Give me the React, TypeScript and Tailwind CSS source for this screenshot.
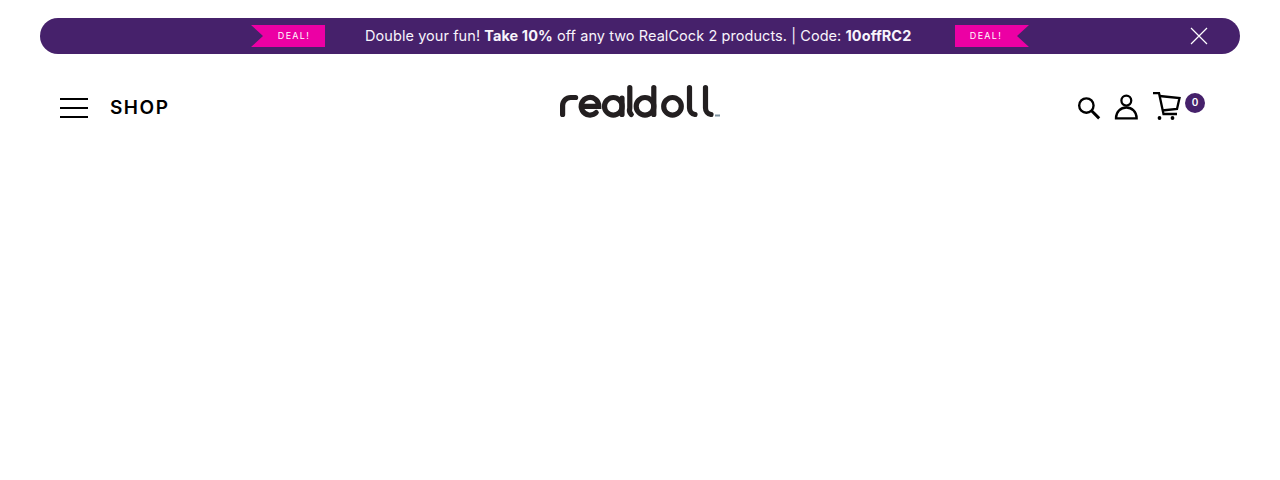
import React from "react";

function Ribbon({ flip }: { flip?: boolean }) {
  return (
    <div className="relative flex h-[22px] w-[74px] items-center justify-center">
      <svg viewBox="0 0 74 22" className="absolute inset-0 h-[22px] w-[74px]">
        <polygon
          fill="#ec00a4"
          points={flip ? "0,0 74,0 62,11 74,22 0,22" : "0,0 74,0 74,22 0,22 12,11"}
        />
      </svg>
      <span className={`relative text-[9px] tracking-[1.3px] text-white ${flip ? "-translate-x-[6px]" : "translate-x-[6px]"}`}>
        DEAL!
      </span>
    </div>
  );
}

function Logo() {
  return (
    <svg width="162" height="36" viewBox="0 0 162 36" fill="none" stroke="#231f20" strokeWidth="5.2" strokeLinecap="round" role="img" aria-label="realdoll">
      <path d="M2.6 30.5 V21.5 a8 8 0 0 1 8 -8 h5" />
      <path d="M21.2 22.3 h17.6 a8.8 8.8 0 1 0 -2.6 6.2" />
      <circle cx="53.3" cy="22.3" r="8.8" />
      <path d="M62 14 V30.5" />
      <path d="M69.8 3.5 V24 a6.5 6.5 0 0 0 1.5 6.5" />
      <circle cx="85" cy="22.3" r="8.8" />
      <path d="M93.8 3.5 V30.5" />
      <circle cx="112.5" cy="22.3" r="8.8" />
      <path d="M129.5 3.5 V24 a6.5 6.5 0 0 0 5.5 6.5" />
      <path d="M145.5 3.5 V24 a6.5 6.5 0 0 0 5.5 6.5" />
      <path d="M155 31.5 h5" stroke="#7d93a0" strokeWidth="2" strokeLinecap="butt" />
    </svg>
  );
}

export default function App() {
  return (
    <div className="h-[480px] w-[1280px] bg-white font-['Inter','Liberation_Sans',sans-serif]">
      <div className="px-10 pt-[18px]">
        <div className="relative flex h-9 items-center justify-center gap-10 rounded-full bg-[#46216b]">
          <Ribbon />
          <p className="w-[550px] whitespace-nowrap text-left text-[14.5px] tracking-[0.07px] text-[#f8f4fc]">
            Double your fun! <b className="font-bold">Take 10%</b> off any two RealCock 2 products. | Code: <b className="font-bold">10offRC2</b>
          </p>
          <Ribbon flip />
          <svg className="absolute right-[32px] top-[9px]" width="18" height="18" viewBox="0 0 18 18" stroke="#fff" strokeWidth="1.2">
            <path d="M1 1 L17 17 M17 1 L1 17" />
          </svg>
        </div>
      </div>
      <header className="flex h-[108px] items-center pl-[60px] pr-[75px]">
        <div className="flex w-[500px] items-center gap-[22px]">
          <div className="flex w-7 flex-col gap-[7px]">
            <span className="h-[2px] bg-black" />
            <span className="h-[2px] bg-black" />
            <span className="h-[2px] bg-black" />
          </div>
          <span className="text-[19px] font-semibold tracking-[1.5px] text-black">SHOP</span>
        </div>
        <div className="-mt-[13px]">
          <Logo />
        </div>
        <div className="ml-auto flex w-[127px] items-center gap-[12px]">
          <svg className="-mt-[1px] -translate-x-[1px]" width="24" height="24" viewBox="0 0 24 24" fill="none" stroke="#000" strokeWidth="2.4">
            <circle cx="9.5" cy="9.5" r="7.3" />
            <path d="M14.8 14.8 L22.5 22.5" strokeWidth="3" />
          </svg>
          <svg className="-mt-[3px]" width="25" height="26" viewBox="0 0 25 26" fill="none" stroke="#000" strokeWidth="2.3">
            <circle cx="12.5" cy="6.5" r="5" />
            <path d="M2 24.5 H23 C23 17.5 18 13.5 12.5 13.5 C7 13.5 2 17.5 2 24.5 Z" />
          </svg>
          <div className="relative -mt-[3px] ml-[2px]">
            <svg width="30" height="29" viewBox="0 0 30 29" fill="none" stroke="#000" strokeWidth="2.3">
              <path d="M1 1 H7 L11.5 22 H25" />
              <path d="M7.5 4 L27.5 6 L25 17 L10 18.5" />
              <circle cx="7.5" cy="26" r="1.9" fill="#000" stroke="none" />
              <circle cx="20.5" cy="26" r="1.9" fill="#000" stroke="none" />
            </svg>
          </div>
          <span className="-ml-[9px] -mt-[11px] flex h-5 w-5 items-center justify-center rounded-full bg-[#46216b] text-[10px] font-semibold text-white">0</span>
        </div>
      </header>
    </div>
  );
}
